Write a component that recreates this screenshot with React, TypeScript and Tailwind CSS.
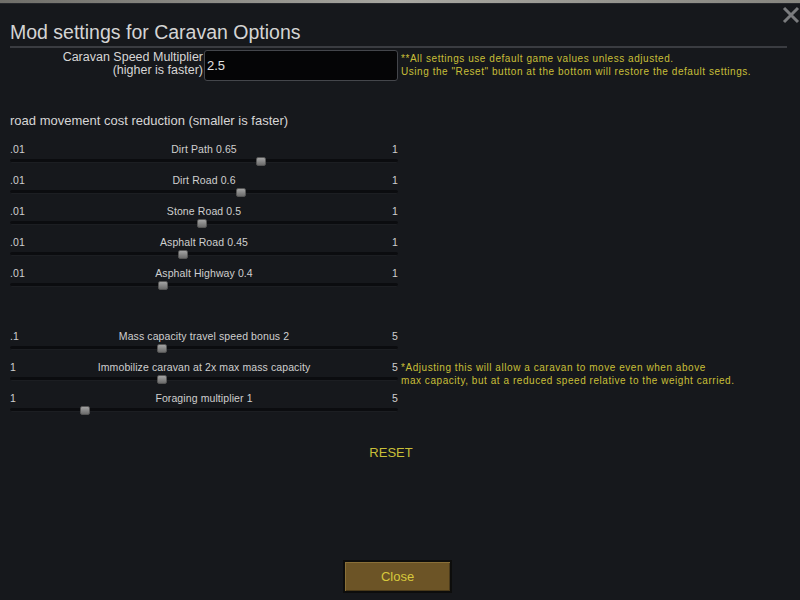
import React from "react";

type SliderProps = {
  min: string;
  max: string;
  label: string;
  pos: number; // thumb centre, px from track start
};

function Slider({ min, max, label, pos }: SliderProps) {
  return (
    <div className="w-[388px]">
      <div className="grid grid-cols-[1fr_auto_1fr] h-[12px] text-[10.5px] leading-[12px] tracking-[0.1px] text-[#cfcfcf]">
        <span>{min}</span>
        <span className="text-center">{label}</span>
        <span className="text-right">{max}</span>
      </div>
      <div className="relative h-[9px] mt-[2px]">
        <div className="absolute left-0 right-0 top-[2px] h-[4px] rounded-full bg-[#0b0c0f] border-b border-[#1c1e22]" />
        <div
          className="absolute top-0 w-[10px] h-[9px] rounded-[2px] bg-gradient-to-b from-[#a3a3a3] to-[#6c6c6c] border border-[#555]"
          style={{ left: pos - 5 }}
        />
      </div>
    </div>
  );
}

const roads = [
  { label: "Dirt Path 0.65", pos: 251 },
  { label: "Dirt Road 0.6", pos: 231 },
  { label: "Stone Road 0.5", pos: 192 },
  { label: "Asphalt Road 0.45", pos: 173 },
  { label: "Asphalt Highway 0.4", pos: 153 },
];

export default function App() {
  return (
    <div className="w-[800px] h-[600px] bg-[#16181c] flex flex-col overflow-hidden font-['Liberation_Sans',Arial,sans-serif]">
      {/* game backdrop peeking through at the top */}
      <div className="h-[3px] bg-gradient-to-r from-[#6f6e69] via-[#a8a7a1] to-[#86857f]" />

      <div className="relative flex-1 flex flex-col border-t border-[#25272c]">
        {/* close X */}
        <svg
          className="absolute right-[0px] top-[2px]"
          width="18"
          height="18"
          viewBox="0 0 18 18"
        >
          <path d="M2 2 L16 16 M16 2 L2 16" stroke="#7a7b7e" strokeWidth="3" />
        </svg>

        <h1 className="pt-[16px] pl-[10px] text-[19.5px] leading-[24px] text-[#d4d4d4]">
          Mod settings for Caravan Options
        </h1>
        <div className="mt-[2px] ml-[10px] w-[777px] h-[2px] bg-[#3a3c41]" />

        {/* speed multiplier */}
        <div className="mt-[2px] pl-[10px] flex">
          <div className="w-[194px] pt-[1px] pr-[1px] text-right text-[12.5px] leading-[13px] text-[#d6d6d6]">
            Caravan Speed Multiplier
            <br />
            (higher is faster)
          </div>
          <div className="w-[194px] h-[31px] bg-[#050506] border border-[#44464b] rounded-[3px] flex items-center pl-[2px] text-[13px] text-[#e0e0e0]">
            2.5
          </div>
          <div className="ml-[3px] pt-[2px] text-[10px] leading-[13px] tracking-[0.55px] text-[#c8bf38]">
            **All settings use default game values unless adjusted.
            <br />
            Using the "Reset" button at the bottom will restore the default settings.
          </div>
        </div>

        <p className="mt-[32px] pl-[10px] text-[13px] leading-[16px] text-[#d6d6d6]">
          road movement cost reduction (smaller is faster)
        </p>

        <div className="mt-[14px] pl-[10px] flex flex-col gap-[8px]">
          {roads.map((r) => (
            <Slider key={r.label} min=".01" max="1" label={r.label} pos={r.pos} />
          ))}
        </div>

        <div className="mt-[40px] pl-[10px] flex flex-col gap-[8px]">
          <Slider min=".1" max="5" label="Mass capacity travel speed bonus 2" pos={152} />
          <div className="flex h-[23px]">
            <Slider min="1" max="5" label="Immobilize caravan at 2x max mass capacity" pos={152} />
            <div className="ml-[3px] text-[10px] leading-[13px] tracking-[0.55px] text-[#c8bf38]">
              *Adjusting this will allow a caravan to move even when above
              <br />
              max capacity, but at a reduced speed relative to the weight carried.
            </div>
          </div>
          <Slider min="1" max="5" label="Foraging multiplier 1" pos={75} />
        </div>

        <div className="mt-[30px] w-[782px] text-center text-[13px] leading-[16px] text-[#c8bf38]">
          RESET
        </div>

        <div className="mt-auto mb-[7px] w-[795px] flex justify-center">
          <button className="w-[109px] h-[33px] border-2 border-[#0d0d0c] bg-[#6c5426] shadow-[inset_1px_1px_0_#8a7038,inset_-1px_-1px_0_#4a3a1a] text-[13px] text-[#d7c93c]">
            Close
          </button>
        </div>
      </div>
    </div>
  );
}
